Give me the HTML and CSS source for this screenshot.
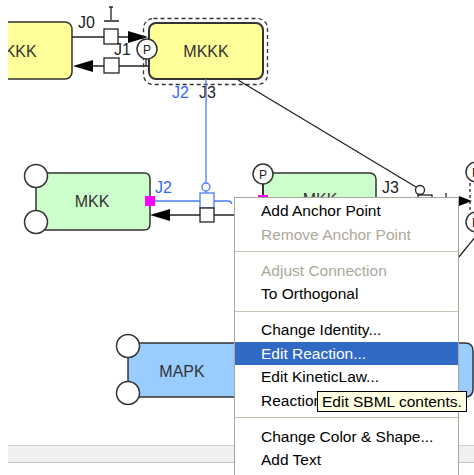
FILE: index.html
```html
<!DOCTYPE html>
<html lang="en">

<head>
  <meta charset="UTF-8" />
  <title>Reaction editor</title>
  <link rel="stylesheet" href="styles.css">
</head>

<body>
  <div class="editor">
    <svg class="canvas" viewBox="8 0 466 445" width="466" height="445">
      <!-- upstream MKKK (scrolled off to the left) -->
      <rect class="node yellow" x="-44" y="22" width="116" height="57" rx="7" />
      <text class="node-label" x="14" y="57" text-anchor="middle">MKKK</text>

      <!-- J0 / J1 -->
      <line class="edge" x1="72" y1="37" x2="130" y2="37" />
      <polygon class="head" points="128,31 148,37 128,43" />
      <rect class="joint" x="104" y="29" width="14" height="15" />
      <path class="edge" d="M111 7 V20 M104 21 H119 M109 7 H113" />
      <text class="jlabel" x="78" y="28">J0</text>

      <line class="edge" x1="90" y1="66" x2="148" y2="66" />
      <polygon class="head" points="73,66 93,60 93,72" />
      <rect class="joint" x="104" y="58" width="15" height="15" />

      <!-- selected MKKK -->
      <rect class="select" x="143.5" y="18.5" width="124" height="66" rx="10" />
      <rect class="node yellow thick" x="149" y="23" width="114" height="56" rx="7" />
      <text class="node-label" x="206" y="57" text-anchor="middle">MKKK</text>
      <line class="edge" x1="146" y1="58" x2="146" y2="66" />
      <circle class="site" cx="147" cy="49" r="10" />
      <text class="p-label" x="147" y="53.5" text-anchor="middle">P</text>
      <text class="jlabel" x="114" y="55">J1</text>

      <text class="jlabel blue" x="172" y="98">J2</text>
      <text class="jlabel" x="199" y="98">J3</text>

      <!-- J2 modifier -->
      <line class="edge blue" x1="206" y1="79" x2="206" y2="183" />
      <circle class="mod blue" cx="206" cy="187" r="4" />
      <line class="edge blue" x1="206" y1="191" x2="206" y2="193" />

      <!-- J3 modifier -->
      <line class="edge" x1="238" y1="80" x2="416" y2="187" />
      <circle class="mod" cx="420" cy="190" r="4.5" />
      <rect class="joint" x="418" y="195" width="14" height="14" />

      <!-- MKK -->
      <path class="node green" d="M36 173 H144 Q150 173 150 179 V224 Q150 230 144 230 H36 Z" />
      <circle class="site" cx="36" cy="176" r="11.5" />
      <circle class="site" cx="36" cy="222" r="11.5" />
      <text class="node-label" x="92" y="207" text-anchor="middle">MKK</text>
      <rect class="handle" x="145" y="196" width="10" height="10" />
      <text class="jlabel blue" x="155" y="193">J2</text>

      <line class="edge blue" x1="155" y1="201" x2="200" y2="201" />
      <path class="edge blue" d="M214 201 H228 q3 0 4 3" />
      <rect class="joint blue" x="200" y="193" width="14" height="15" />
      <line class="edge" x1="168" y1="215" x2="240" y2="215" />
      <rect class="joint" x="200" y="208" width="14" height="14" />
      <polygon class="head" points="150,215 170,209 170,221" />

      <!-- MKK-P (behind menu) -->
      <rect class="node green" x="263" y="173" width="113" height="80" rx="6" />
      <text class="node-label" x="320" y="205" text-anchor="middle">MKK</text>
      <line class="edge" x1="263" y1="184" x2="263" y2="195" />
      <rect class="handle" x="258" y="195" width="10" height="10" />
      <circle class="site" cx="263" cy="174" r="10" />
      <text class="p-label" x="263" y="178.5" text-anchor="middle">P</text>
      <text class="jlabel" x="382" y="193">J3</text>

      <!-- right edge -->
      <line class="edge" x1="446" y1="193" x2="446" y2="197" />
      <polygon class="head" points="459,196 472,201 459,206" />
      <line class="edge dashed" x1="470" y1="183" x2="470" y2="212" />
      <circle class="site" cx="476" cy="172" r="10" />
      <text class="p-label" x="476" y="176.5" text-anchor="middle">P</text>
      <circle class="site" cx="476" cy="222" r="10" />
      <text class="p-label" x="476" y="226.5" text-anchor="middle">P</text>
      <line class="edge" x1="458" y1="258" x2="476" y2="236" />

      <!-- MAPK -->
      <path class="node blue-fill" d="M128 343 H465 Q473 343 473 351 V389 Q473 397 465 397 H128 Z" />
      <circle class="site" cx="128" cy="346" r="11.5" />
      <circle class="site" cx="128" cy="393" r="11.5" />
      <text class="node-label" x="182" y="377" text-anchor="middle">MAPK</text>
    </svg>
    <div class="hbar"></div>

    <div class="menu">
      <div class="menu-item">Add Anchor Point</div>
      <div class="menu-item disabled">Remove Anchor Point</div>
      <div class="menu-sep"></div>
      <div class="menu-item disabled">Adjust Connection</div>
      <div class="menu-item">To Orthogonal</div>
      <div class="menu-sep"></div>
      <div class="menu-item">Change Identity...</div>
      <div class="menu-item active">Edit Reaction...</div>
      <div class="menu-item">Edit KineticLaw...</div>
      <div class="menu-item">Reaction Properties...</div>
      <div class="menu-sep"></div>
      <div class="menu-item">Change Color &amp; Shape...</div>
      <div class="menu-item">Add Text</div>
      <div class="menu-item">Delete</div>
    </div>

    <div class="tip">Edit SBML contents.</div>
  </div>
</body>

</html>
```

FILE: styles.css
```css
body {
  margin: 0;
  background: #fff;
  font-family: "Liberation Sans", Arial, sans-serif;
  color: #000;
}

.editor {
  position: relative;
  width: 474px;
  height: 475px;
  padding-left: 8px;
  box-sizing: border-box;
  overflow: hidden;
}

.canvas {
  display: block;
}

.hbar {
  height: 18px;
  box-sizing: border-box;
  background: #f0f0f0;
  border-top: 1px solid #cdcdcd;
  border-bottom: 1px solid #c4c4c4;
}

/* diagram */
.node {
  stroke: #333;
  stroke-width: 1.5;
}

.node.thick {
  stroke-width: 2;
}

.yellow {
  fill: #ffff99;
}

.green {
  fill: #ccffcc;
}

.blue-fill {
  fill: #99ccff;
}

.select {
  fill: none;
  stroke: #333;
  stroke-width: 1.3;
  stroke-dasharray: 4 3;
}

.edge {
  stroke: #222;
  stroke-width: 1.3;
  fill: none;
}

.edge.blue {
  stroke: #4a7cf5;
}

.edge.dashed {
  stroke-dasharray: 3 3;
}

.head {
  fill: #000;
}

.joint {
  fill: #fff;
  stroke: #222;
  stroke-width: 1.3;
}

.joint.blue {
  stroke: #4a7cf5;
}

.mod {
  fill: #fff;
  stroke: #222;
  stroke-width: 1.3;
}

.mod.blue {
  stroke: #4a7cf5;
}

.site {
  fill: #fff;
  stroke: #333;
  stroke-width: 1.5;
}

.handle {
  fill: #ff00ff;
}

.node-label {
  font: 16px "Liberation Sans", Arial, sans-serif;
  fill: #333;
}

.jlabel {
  font: 16px "Liberation Sans", Arial, sans-serif;
  fill: #222;
}

.jlabel.blue {
  fill: #3366ff;
}

.p-label {
  font: 12px "Liberation Sans", Arial, sans-serif;
  fill: #222;
}

/* popup menu */
.menu {
  position: absolute;
  left: 234px;
  top: 197px;
  width: 225px;
  box-sizing: border-box;
  padding: 1px 0;
  background: #fff;
  border: 1px solid #aca899;
  font-size: 15.5px;
}

.menu-item {
  height: 23.5px;
  line-height: 23.5px;
  padding-left: 26px;
  white-space: nowrap;
}

.menu-item.disabled {
  color: #aca899;
}

.menu-item.active {
  background: #316ac5;
  color: #fff;
}

.menu-sep {
  height: 12.5px;
  padding-top: 5px;
  box-sizing: border-box;
}

.menu-sep::before {
  content: "";
  display: block;
  border-top: 1px solid #c5c2b2;
}

.tip {
  position: absolute;
  left: 317px;
  top: 391px;
  height: 21px;
  box-sizing: border-box;
  padding: 0 4px;
  line-height: 19px;
  font-size: 15.5px;
  background: #ffffe1;
  border: 1px solid #000;
  white-space: nowrap;
}
```
